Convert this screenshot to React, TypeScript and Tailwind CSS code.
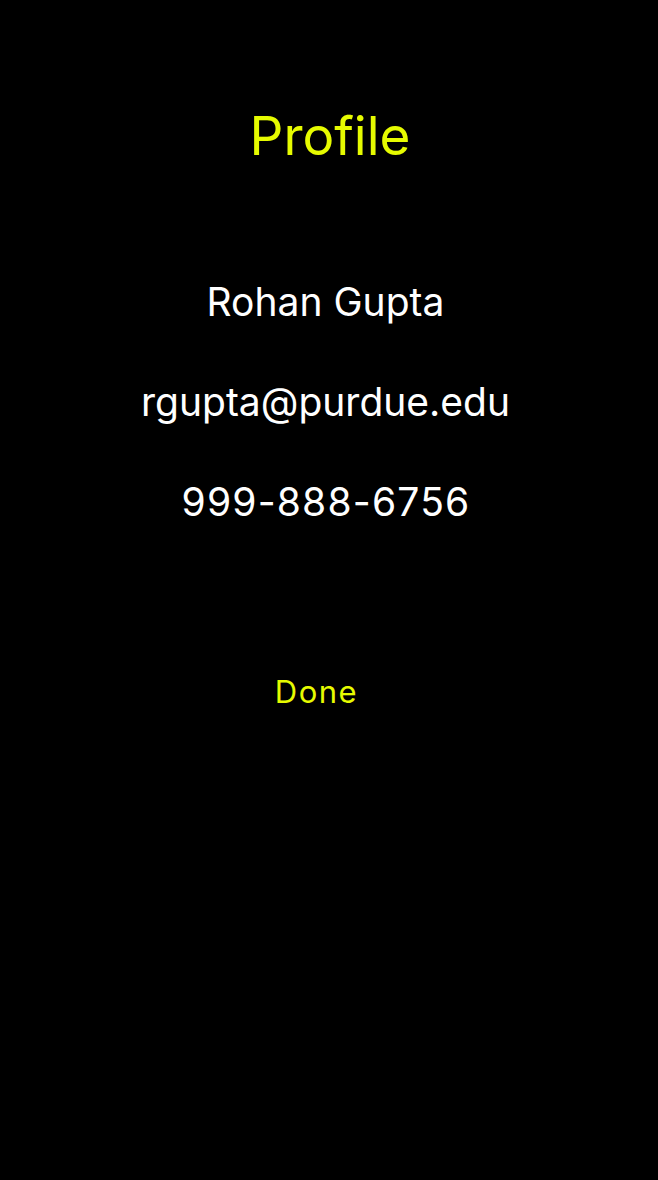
export default function App() {
  return (
    <div className="flex min-h-[1180px] w-full flex-col items-center bg-black font-['Inter',sans-serif]">
      {/* title */}
      <h1 className="mt-[104px] pl-[2px] text-[53px] leading-[64px] text-[#e6fb00]">Profile</h1>

      {/* details */}
      <div className="mt-[112px] flex flex-col items-center gap-[56px] pr-[7px] text-[39px] leading-[44px] text-white">
        <p>Rohan Gupta</p>
        <p>rgupta@purdue.edu</p>
        <p className="pl-[1px] tracking-[1.2px]">999-888-6756</p>
      </div>

      <button type="button" className="mt-[150px] pr-[25px] text-[31px] leading-[36px] tracking-[1.5px] text-[#e6fb00]">
        Done
      </button>
    </div>
  )
}
